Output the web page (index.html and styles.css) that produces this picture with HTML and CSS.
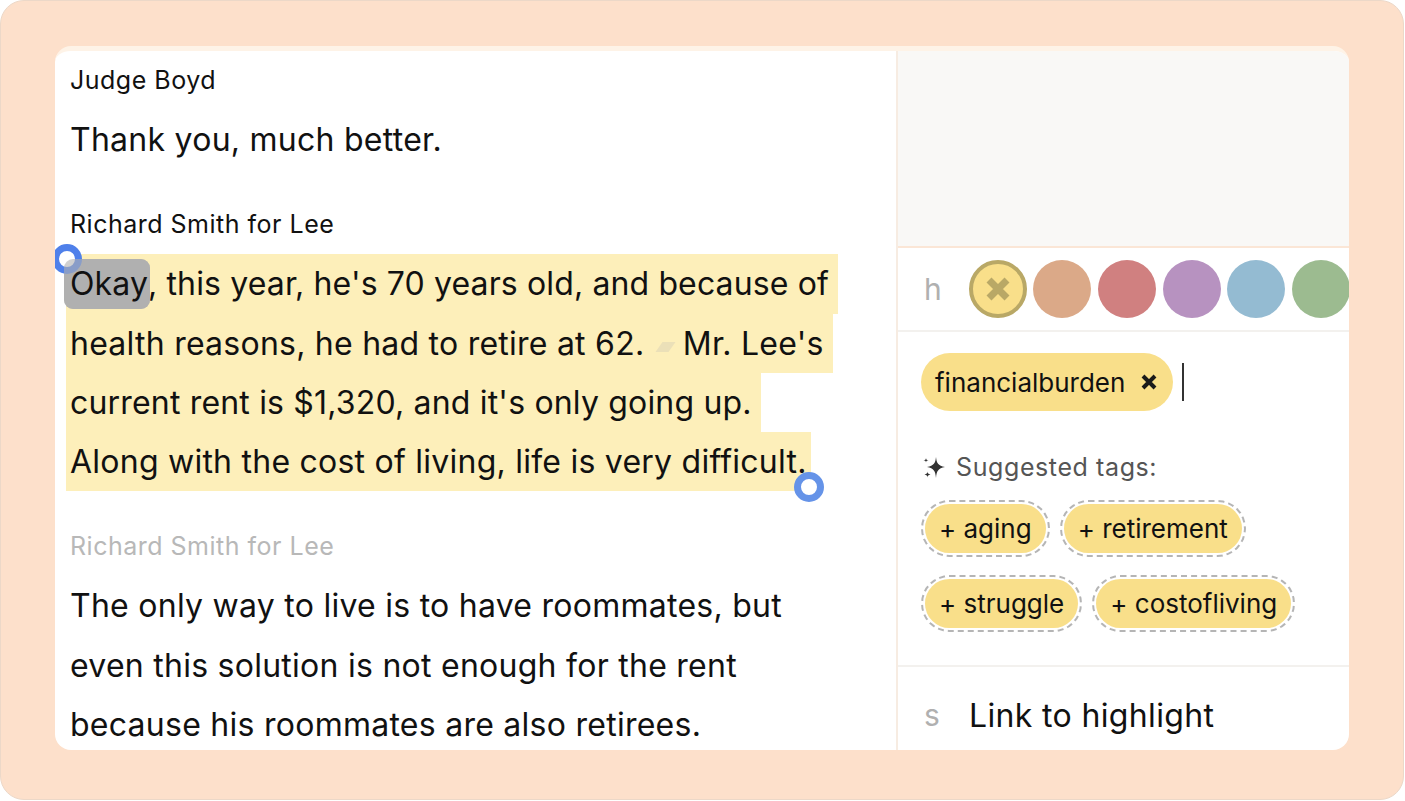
FILE: index.html
```html
<!DOCTYPE html>
<html>
  <head>
    <title>Transcript highlight</title>
    <meta name="viewport" content="width=device-width, initial-scale=1" />
    <link rel="stylesheet" href="styles.css">
  </head>
  <body>
    <div class="frame">
      <div class="card">
        <div class="transcript">
          <div class="turn">
            <div class="speaker">Judge Boyd</div>
            <div class="line">Thank you, much better.</div>
          </div>
          <div class="turn">
            <div class="speaker">Richard Smith for Lee</div>
            <div class="line hl hl-first"><span class="okay"><span class="handle handle-start"></span><span class="okay-text">Okay</span></span>, this year, he's 70 years old, and because of</div>
            <div class="line hl">health reasons, he had to retire at 62. <span class="mark"></span> Mr. Lee's</div>
            <div class="line hl hl-third">current rent is $1,320, and it's only going up.</div>
            <div class="line hl hl-last">Along with the cost of living, life is very difficult.<span class="handle handle-end"></span></div>
          </div>
          <div class="turn">
            <div class="speaker faded">Richard Smith for Lee</div>
            <div class="line">The only way to live is to have roommates, but</div>
            <div class="line">even this solution is not enough for the rent</div>
            <div class="line">because his roommates are also retirees.</div>
          </div>
        </div>
        <div class="side">
          <div class="preview"></div>
          <div class="colors">
            <span class="key">h</span>
            <span class="dot dot-active">
              <svg width="30" height="30" viewBox="0 0 30 30"><path d="M6 6 L24 24 M24 6 L6 24" stroke="#b9a866" stroke-width="7" /></svg>
            </span>
            <span class="dot dot-orange"></span>
            <span class="dot dot-red"></span>
            <span class="dot dot-purple"></span>
            <span class="dot dot-blue"></span>
            <span class="dot dot-green"></span>
          </div>
          <div class="tags">
            <div class="tag-input">
              <span class="tag">financialburden
                <svg width="18" height="18" viewBox="0 0 18 18"><path d="M3 3 L15 15 M15 3 L3 15" stroke="#1a1a1a" stroke-width="4" /></svg>
              </span>
              <span class="caret"></span>
            </div>
            <div class="suggest-title">
              <svg width="26" height="26" viewBox="0 0 26 26"><path d="M15 3 C15.6 9 17 11.5 24 13 C17 14.5 15.6 17 15 24 C14.4 17 13 14.5 6 13 C13 11.5 14.4 9 15 3 Z M5 4 C5.2 5.6 5.6 6 7.5 6.3 C5.6 6.6 5.2 7 5 8.6 C4.8 7 4.4 6.6 2.5 6.3 C4.4 6 4.8 5.6 5 4 Z M6.5 17.5 C6.7 19.6 7.2 20 9.5 20.5 C7.2 21 6.7 21.4 6.5 23.5 C6.3 21.4 5.8 21 3.5 20.5 C5.8 20 6.3 19.6 6.5 17.5 Z" fill="#333" /></svg>
              Suggested tags:
            </div>
            <div class="suggest-row">
              <span class="chip"><span class="chip-fill">+ aging</span></span>
              <span class="chip"><span class="chip-fill">+ retirement</span></span>
            </div>
            <div class="suggest-row">
              <span class="chip"><span class="chip-fill">+ struggle</span></span>
              <span class="chip"><span class="chip-fill">+ costofliving</span></span>
            </div>
          </div>
          <div class="actions">
            <span class="key key-action">s</span>
            <span class="action-label">Link to highlight</span>
          </div>
        </div>
      </div>
    </div>
  </body>
</html>
```

FILE: styles.css
```css
html, body {
  margin: 0;
  height: 100%;
  background: #fff;
}
body {
  font-family: "Inter", "Liberation Sans", sans-serif;
  color: #111;
  overflow: hidden;
}
.frame {
  box-sizing: border-box;
  width: 1404px;
  height: 800px;
  padding: 46px 54px 50px 55px;
  background: #fde0cb;
  border: 1px solid #ecd8c8;
  border-radius: 24px;
}
.card {
  display: flex;
  box-sizing: border-box;
  height: 704px;
  margin: -1px 0 0 -1px;
  background: #fff;
  border-top: 5px solid #fef3e7;
  border-radius: 16px;
  overflow: hidden;
}
.transcript {
  box-sizing: border-box;
  width: 841px;
  padding: 14px 0 0 15px;
  flex-shrink: 0;
}
.turn {
  margin-bottom: 40px;
}
.speaker {
  font-size: 25px;
  line-height: 30px;
  letter-spacing: 0.5px;
  margin-bottom: 15px;
}
.faded {
  color: #b8b8b8;
}
.line {
  font-size: 32px;
  line-height: 59.3px;
  letter-spacing: 0.26px;
  white-space: nowrap;
}
.hl {
  position: relative;
  width: fit-content;
  margin-left: -4px;
  padding: 0 9px 0 4px;
  letter-spacing: 0.24px;
  background: #fdefba;
}
.hl-first {
  letter-spacing: 0.13px;
}
.hl-third {
  letter-spacing: 0.18px;
}
.hl-last {
  padding-right: 4px;
}
.okay {
  position: relative;
  display: inline-block;
  height: 50px;
  margin: 0 -2px 0 -6px;
  padding: 0 2px 0 6px;
  line-height: 50px;
  background: #b0b0b0;
  border-radius: 9px;
}
.okay::after {
  content: '';
  position: absolute;
  top: 0;
  left: 0;
  right: 0;
  bottom: 0;
  z-index: 2;
  background: rgba(176, 176, 176, 0.6);
  border-radius: 9px;
}
.okay-text {
  position: relative;
  z-index: 3;
}
.handle {
  position: absolute;
  box-sizing: border-box;
  width: 30px;
  height: 30px;
  background: #fff;
  border: 7px solid #6593e8;
  border-radius: 50%;
}
.handle-start {
  top: -15px;
  left: -12px;
  z-index: 1;
  border-color: #4f80ea;
}
.handle-end {
  right: -13px;
  bottom: -11px;
}
.mark {
  display: inline-block;
  width: 13px;
  height: 10px;
  margin: 0 2px 0 5px;
  vertical-align: 3px;
  background: #ebe0b8;
  transform: skewX(-35deg);
}
.side {
  flex: 1;
  min-width: 0;
  border-left: 2px solid #f7ece2;
}
.preview {
  height: 195px;
  background: #f9f8f6;
  border-bottom: 2px solid #fbe6d6;
}
.colors {
  display: flex;
  align-items: center;
  gap: 6.7px;
  height: 82px;
  padding-left: 26px;
  border-bottom: 2px solid #f3f1ee;
}
.key {
  width: 38px;
  flex-shrink: 0;
  font-size: 30px;
  color: #b0b0b0;
}
.key-action {
  width: 45px;
}
.dot {
  display: flex;
  align-items: center;
  justify-content: center;
  box-sizing: border-box;
  width: 58px;
  height: 58px;
  flex-shrink: 0;
  border-radius: 50%;
}
.dot-active {
  background: #f9df8a;
  border: 4px solid #b9a866;
}
.dot-orange { background: #dba988; }
.dot-red { background: #d08080; }
.dot-purple { background: #b792c0; }
.dot-blue { background: #94bbd2; }
.dot-green { background: #9cbb90; }
.tags {
  box-sizing: border-box;
  height: 335px;
  padding: 21px 0 0 23px;
  border-bottom: 2px solid #f3f1ee;
}
.tag-input {
  display: flex;
  align-items: center;
  gap: 9px;
}
.tag {
  display: flex;
  align-items: center;
  gap: 15px;
  height: 58px;
  padding: 0 15px 0 14px;
  font-size: 26px;
  background: #f9df8a;
  border-radius: 29px;
}
.caret {
  width: 2px;
  height: 38px;
  background: #333;
}
.suggest-title {
  display: flex;
  align-items: center;
  gap: 9px;
  margin-top: 40px;
  font-size: 25px;
  line-height: 32px;
  letter-spacing: 0.6px;
  color: #555;
}
.suggest-row {
  display: flex;
  gap: 10px;
  margin-top: 18px;
}
.suggest-title + .suggest-row {
  margin-top: 17px;
}
.chip {
  box-sizing: border-box;
  height: 57px;
  padding: 2px;
  background: #fff;
  border: 2px dashed #b5b5b5;
  border-radius: 29px;
}
.chip-fill {
  display: block;
  height: 49px;
  padding: 0 14px;
  font-size: 26px;
  line-height: 49px;
  background: #f9df8a;
  border-radius: 25px;
}
.actions {
  display: flex;
  align-items: center;
  height: 96px;
  padding-left: 26px;
}
.action-label {
  font-size: 32px;
  letter-spacing: 0.35px;
}
```
